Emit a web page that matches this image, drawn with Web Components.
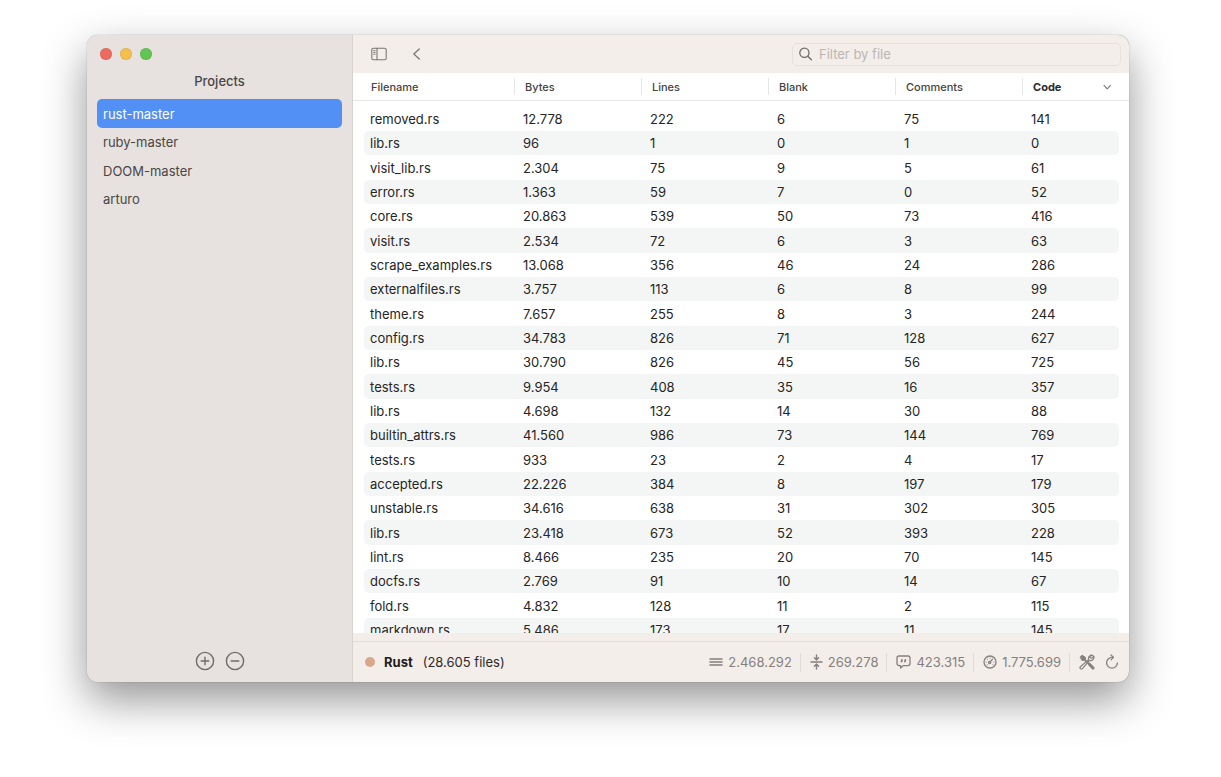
<!DOCTYPE html>
<html lang="en">
<head>
<meta charset="utf-8">
<title>Projects</title>
<style>
  html { background: #fff; }
  body { margin: 0; height: 100vh; box-sizing: border-box; padding: 35px 92px 95px 87px; display: flex; font: 13px/16px Inter, "Liberation Sans", sans-serif; color: #2b2928; }
</style>
</head>
<body>
<app-window>
  <side-bar slot="sidebar"></side-bar>
  <tool-bar></tool-bar>
  <file-table></file-table>
  <status-bar></status-bar>
</app-window>

<script>
const define = (name, html, setup) => customElements.define(name, class extends HTMLElement {
  constructor() {
    super();
    this.attachShadow({ mode: 'open' }).innerHTML = html;
    if (setup) setup(this.shadowRoot);
  }
});

const reset = `
  :host, * { box-sizing: border-box; }
  button { font: inherit; color: inherit; border: 0; padding: 0; margin: 0; background: none; display: flex; align-items: center; }
  svg { display: block; fill: none; stroke: currentColor; stroke-linecap: round; stroke-linejoin: round; }
`;

define('app-window', `
  <style>
    :host { flex: 1; min-width: 0; display: flex; border-radius: 11px; overflow: hidden; background: #f4eeea;
      box-shadow: 0 0 1px rgba(0,0,0,.5), 0 18px 44px rgba(0,0,0,.42); }
    ::slotted([slot=sidebar]) { flex: 0 0 266px; }
    main { flex: 1; min-width: 0; display: flex; flex-direction: column; }
  </style>
  <slot name="sidebar"></slot>
  <main><slot></slot></main>
`);

define('window-controls', `
  <style>
    ${reset}
    :host { display: flex; gap: 8px; padding: 13px 13px 0; }
    button { width: 12px; height: 12px; border-radius: 50%; box-shadow: inset 0 0 1px rgba(0,0,0,.3); }
    .close { background: #ec6a5e; }
    .minimise { background: #f4bf4f; }
    .zoom { background: #61c554; }
  </style>
  <button class="close" aria-label="Close"></button>
  <button class="minimise" aria-label="Minimise"></button>
  <button class="zoom" aria-label="Zoom"></button>
`);

define('project-link', `
  <style>
    ${reset}
    :host { display: block; height: 28px; }
    :host(:nth-child(odd)) { height: 29px; }
    a { display: flex; align-items: center; height: 100%; padding: 0 6px; border-radius: 5px; color: #4a4645; text-decoration: none; }
    :host([selected]) a { background: #5290f5; color: #fff; }
  </style>
  <a href="#"><slot></slot></a>
`);

define('side-bar', `
  <style>
    ${reset}
    :host { display: flex; flex-direction: column; background: #e7e2df; border-right: 1px solid #d9d3d0; color: #4a4645; }
    h2 { margin: 0; padding: 13px 0 10px; font: inherit; font-weight: 500; text-align: center; }
    nav { padding: 0 10px; }
    footer { margin-top: auto; display: flex; justify-content: center; gap: 10px; padding-bottom: 11px; color: #6f6b69; }
  </style>
  <window-controls></window-controls>
  <h2>Projects</h2>
  <nav aria-label="Projects">
    <project-link selected>rust-master</project-link>
    <project-link>ruby-master</project-link>
    <project-link>DOOM-master</project-link>
    <project-link>arturo</project-link>
  </nav>
  <footer>
    <button aria-label="Add project"><svg width="20" height="20" viewBox="0 0 20 20" stroke-width="1.4"><circle cx="10" cy="10" r="8.6"/><path d="M10 6.2v7.6M6.2 10h7.6"/></svg></button>
    <button aria-label="Remove project"><svg width="20" height="20" viewBox="0 0 20 20" stroke-width="1.4"><circle cx="10" cy="10" r="8.6"/><path d="M6.2 10h7.6"/></svg></button>
  </footer>
`);

define('tool-bar', `
  <style>
    ${reset}
    :host { display: flex; align-items: center; height: 38px; padding: 0 8px 0 18px; gap: 24px; color: #7b7673; }
    label { margin-left: auto; flex: 0 1 329px; height: 23px; display: flex; align-items: center; gap: 7px; padding: 0 6px; border: 1px solid #e7e1dd; border-radius: 5px; }
    label svg { color: #6f6b69; }
    input { flex: 1; min-width: 0; border: 0; padding: 0; outline: 0; background: none; font: inherit; color: #2b2928; }
    input::placeholder { color: #bab5b2; opacity: 1; }
  </style>
  <button aria-label="Toggle sidebar"><svg width="16" height="14" viewBox="0 0 16 14" stroke-width="1.1"><rect x=".8" y="1.2" width="14.4" height="11.6" rx="1.6"/><path d="M6 1.2v11.6"/><path d="M2.6 3.6h1.6M2.6 5.4h1.6M2.6 7.2h1.6" stroke-width=".9"/></svg></button>
  <button aria-label="Back"><svg width="12" height="14" viewBox="0 0 12 14" stroke-width="1.3"><path d="M8.3 2 2.8 7l5.5 5"/></svg></button>
  <label>
    <svg width="13" height="14" viewBox="0 0 13 14" stroke-width="1.3"><circle cx="5.4" cy="5.8" r="4.6"/><path d="m8.8 9.2 3.6 3.6"/></svg>
    <input type="text" placeholder="Filter by file" aria-label="Filter by file">
  </label>
`);

const files = [
  ['removed.rs', '12.778', 222, 6, 75, 141],
  ['lib.rs', '96', 1, 0, 1, 0],
  ['visit_lib.rs', '2.304', 75, 9, 5, 61],
  ['error.rs', '1.363', 59, 7, 0, 52],
  ['core.rs', '20.863', 539, 50, 73, 416],
  ['visit.rs', '2.534', 72, 6, 3, 63],
  ['scrape_examples.rs', '13.068', 356, 46, 24, 286],
  ['externalfiles.rs', '3.757', 113, 6, 8, 99],
  ['theme.rs', '7.657', 255, 8, 3, 244],
  ['config.rs', '34.783', 826, 71, 128, 627],
  ['lib.rs', '30.790', 826, 45, 56, 725],
  ['tests.rs', '9.954', 408, 35, 16, 357],
  ['lib.rs', '4.698', 132, 14, 30, 88],
  ['builtin_attrs.rs', '41.560', 986, 73, 144, 769],
  ['tests.rs', '933', 23, 2, 4, 17],
  ['accepted.rs', '22.226', 384, 8, 197, 179],
  ['unstable.rs', '34.616', 638, 31, 302, 305],
  ['lib.rs', '23.418', 673, 52, 393, 228],
  ['lint.rs', '8.466', 235, 20, 70, 145],
  ['docfs.rs', '2.769', 91, 10, 14, 67],
  ['fold.rs', '4.832', 128, 11, 2, 115],
  ['markdown.rs', '5.486', 173, 17, 11, 145],
];

define('file-table', `
  <style>
    ${reset}
    :host { display: block; flex: 1; min-height: 0; overflow: hidden auto; scrollbar-width: none; background: #fff; }
    table { width: 100%; table-layout: fixed; border-collapse: separate; border-spacing: 0; }
    .name { width: 161px; }
    .code { width: 107px; }
    th { position: sticky; top: 0; height: 28px; padding: 0 0 0 11px; border-bottom: 1px solid #e8e8e8; text-align: left; font-size: 11px; font-weight: 500; color: #454342;
      background: linear-gradient(#e6e6e6, #e6e6e6) left center / 1px 17px no-repeat #fff; }
    th:first-child { padding-left: 18px; background: #fff; }
    th:last-child { padding-right: 17px; font-weight: 700; color: #2b2928; }
    th button { width: 100%; justify-content: space-between; }
    tbody::before { content: ""; display: table-row; height: 6px; }
    tbody tr { height: 24px; }
    tbody tr:nth-child(3n) { height: 25px; }
    td { padding: 0 0 0 9px; background-clip: padding-box; color: #262524; }
    td:first-child { padding-left: 6px; border-left: 11px solid transparent; border-radius: 16px 0 0 16px / 5px 0 0 5px; }
    td:last-child { border-right: 10px solid transparent; border-radius: 0 15px 15px 0 / 0 5px 5px 0; }
    tr:nth-child(even) td { background-color: #f4f6f5; }
  </style>
  <table>
    <colgroup><col class="name"><col><col><col><col><col class="code"></colgroup>
    <thead><tr>
      <th>Filename</th><th>Bytes</th><th>Lines</th><th>Blank</th><th>Comments</th>
      <th aria-sort="descending"><button>Code <svg width="10" height="8" viewBox="0 0 10 8" stroke-width="1.1" style="color:#777"><path d="M2 2.4 5.2 5.8 8.4 2.4"/></svg></button></th>
    </tr></thead>
    <tbody></tbody>
  </table>
`, root => {
  root.querySelector('tbody').innerHTML =
    files.map(row => `<tr>${row.map(cell => `<td>${cell}</td>`).join('')}</tr>`).join('');
});

define('stat-item', `
  <style>
    :host { display: flex; align-items: center; gap: 5px; height: 19px; padding: 0 8px 0 9px; border-right: 1px solid #e2dcd8; }
    ::slotted(svg) { display: block; fill: none; stroke: currentColor; stroke-linecap: round; stroke-linejoin: round; }
  </style>
  <slot name="icon"></slot><span><slot></slot></span>
`);

define('status-bar', `
  <style>
    ${reset}
    :host { display: flex; align-items: center; height: 41px; margin-top: 8px; padding: 0 10px 0 12px; border-top: 1px solid #e2dcd8; }
    .dot { width: 10px; height: 10px; border-radius: 50%; background: #d9a88a; margin-right: 9px; }
    strong { font-weight: 700; margin-right: 10px; color: #1f1d1c; }
    .stats { margin-left: auto; display: flex; align-items: center; color: #84807d; }
    .tools { margin: 0 10px 0 9px; }
  </style>
  <span class="dot"></span><strong>Rust</strong><span>(28.605 files)</span>
  <div class="stats">
    <stat-item><svg slot="icon" width="14" height="14" viewBox="0 0 14 14" stroke-width="1.5"><path d="M1 4h12M1 7h12M1 10h12"/></svg>2.468.292</stat-item>
    <stat-item><svg slot="icon" width="13" height="16" viewBox="0 0 13 16" stroke-width="1.4"><path d="M1 8h11M6.5 1v4.6M4.4 3.8l2.1 2.1 2.1-2.1M6.5 15v-4.6M4.4 12.2l2.1-2.1 2.1 2.1"/></svg>269.278</stat-item>
    <stat-item><svg slot="icon" width="15" height="14" viewBox="0 0 15 14" stroke-width="1.3"><path d="M3 1h9a2 2 0 0 1 2 2v5.600a2 2 0 0 1-2 2H7.400L4.600 13v-2.400H3a2 2 0 0 1-2-2V3a2 2 0 0 1 2-2Z"/><path d="M5.900 4.900v.3q0 .8-.4 1.300M9.300 4.900v.3q0 .8-.4 1.300" stroke-width="1.800"/></svg>423.315</stat-item>
    <stat-item><svg slot="icon" width="14" height="14" viewBox="0 0 14 14" stroke-width="1.3"><circle cx="7" cy="7" r="6"/><circle cx="6.600" cy="7.600" r="1.100"/><path d="m7.500 6.700 2-2.500"/><path d="M3.200 7h.1M4.300 4.300h.1M7 3.200h.1M10.800 7h.1M4.300 9.800h.1M9.800 9.800h.1" stroke-width="1"/></svg>1.775.699</stat-item>
    <button class="tools" aria-label="Tools"><svg width="16" height="16" viewBox="0 0 16 16"><path d="M13.800 1.300a3.400 3.400 0 0 0-4.200 4.300L1.400 12.700a1.350 1.350 0 1 0 2 1.900l7.100-8.200a3.400 3.400 0 0 0 4.300-4.200l-2 2-1.600-.4-.4-1.500Z" stroke-width="1.2"/><path d="M1.300 3 3 1.300l3.300 1.900.2 1.900L5.100 6.500 3.200 6.300Z" fill="currentColor" stroke-width="1"/><path d="m5.600 5.600 4 4" stroke-width="1.800"/><path d="m10.400 10.200 3.600 3.900" stroke-width="3"/></svg></button>
    <button aria-label="Refresh"><svg width="14" height="16" viewBox="0 0 14 16" stroke-width="1.300"><path d="M12.400 8.800A5.400 5.400 0 1 1 7 3.400h1.200"/><path d="m6 1 2.500 2.400L6 5.900"/></svg></button>
  </div>
`);
</script>
</body>
</html>
